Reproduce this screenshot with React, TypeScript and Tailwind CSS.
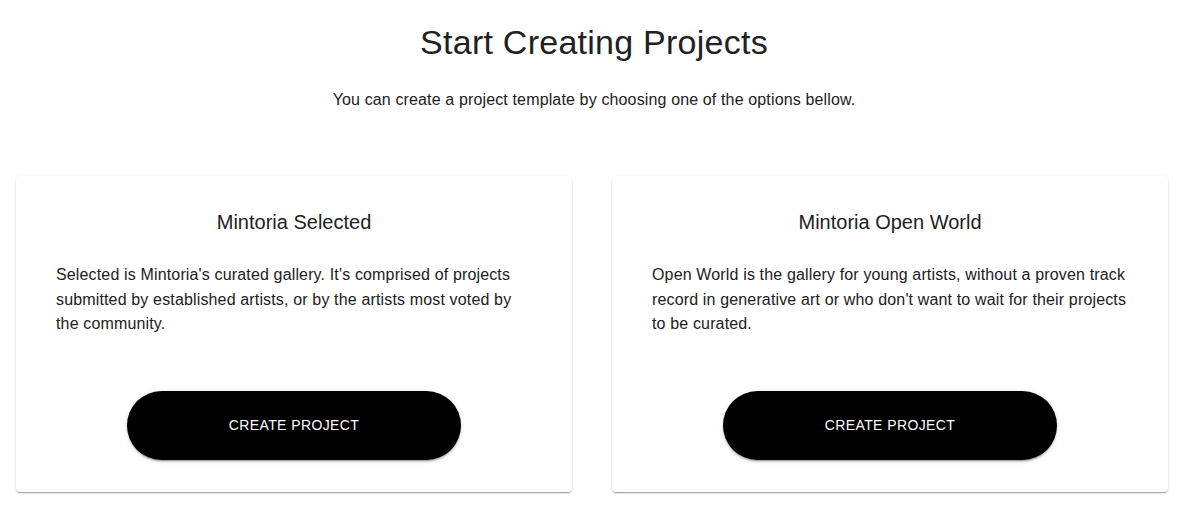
const cards = [
  {
    title: "Mintoria Selected",
    text: "Selected is Mintoria's curated gallery. It's comprised of projects submitted by established artists, or by the artists most voted by the community.",
  },
  {
    title: "Mintoria Open World",
    text: "Open World is the gallery for young artists, without a proven track record in generative art or who don't want to wait for their projects to be curated.",
  },
];

export default function App() {
  return (
    <div className="min-h-screen bg-white [font-family:'Liberation_Sans',Arial,sans-serif] text-[#212121]">
      <div className="pt-[22px] text-center">
        <h1 className="text-[34px] leading-[40px] tracking-[0.25px]">Start Creating Projects</h1>
        <p className="mt-[26px] text-[16px] leading-[24px] tracking-[0.14px]">
          You can create a project template by choosing one of the options bellow.
        </p>
      </div>

      <div className="mt-[64px] grid grid-cols-2 gap-10 pl-4 pr-5">
        {cards.map((card) => (
          <div
            key={card.title}
            className="flex flex-col rounded-[4px] bg-white px-10 pt-[34px] pb-8 shadow-[0_2px_1px_-1px_rgba(0,0,0,0.2),0_1px_1px_0_rgba(0,0,0,0.14),0_1px_3px_0_rgba(0,0,0,0.12)]"
          >
            <h2 className="text-center text-[20px] leading-[24px]">{card.title}</h2>
            <p className="mt-[29px] h-[128px] text-[16px] leading-[24.5px] tracking-[0.15px]">
              {card.text}
            </p>
            <div className="flex justify-center">
              <button className="h-[69px] w-[334px] rounded-full bg-black text-[14px] tracking-[0.4px] text-white shadow-[0_3px_1px_-2px_rgba(0,0,0,0.2),0_2px_2px_0_rgba(0,0,0,0.14),0_1px_5px_0_rgba(0,0,0,0.12)]">
                CREATE PROJECT
              </button>
            </div>
          </div>
        ))}
      </div>
    </div>
  );
}
